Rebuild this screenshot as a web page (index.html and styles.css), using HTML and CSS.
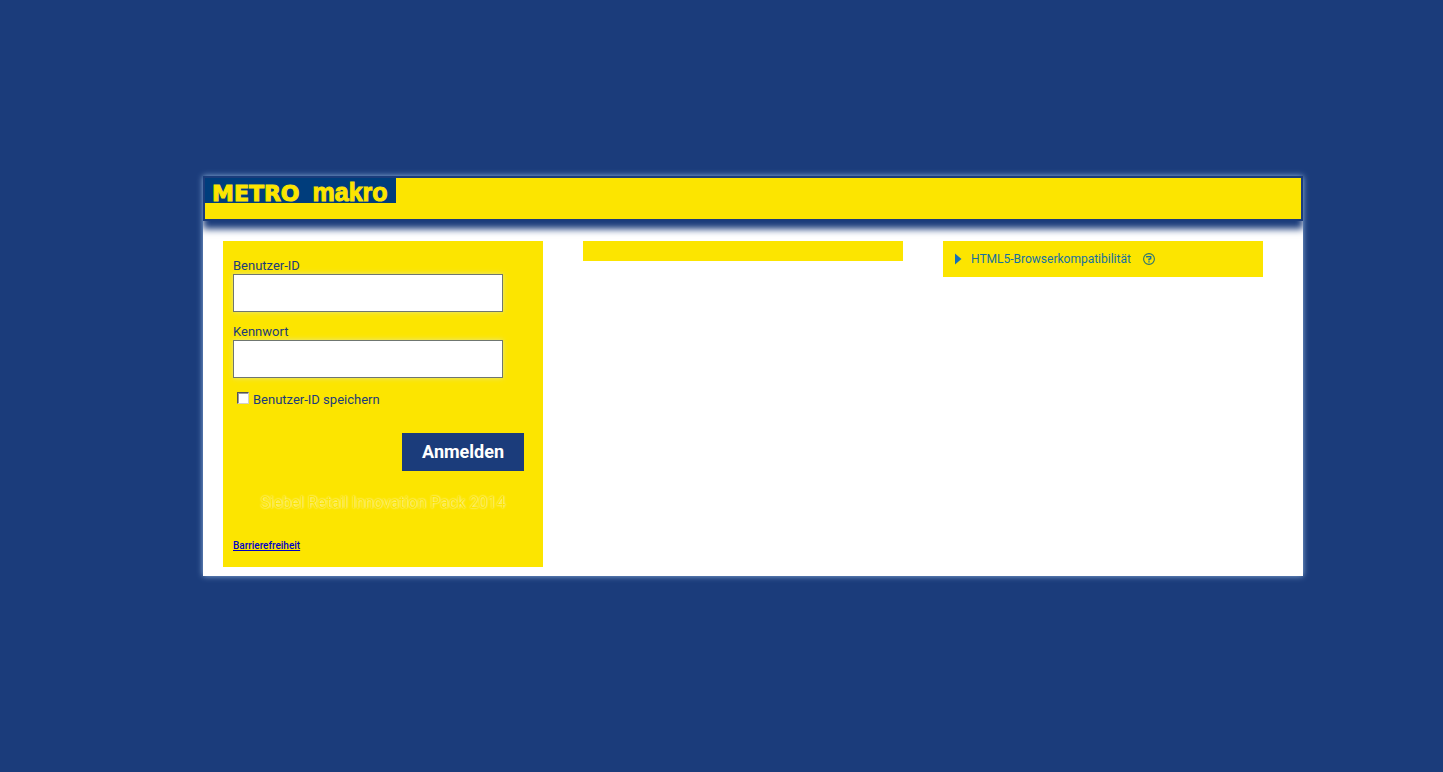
FILE: index.html
```
<!DOCTYPE html>
<html lang="de">
<head>
<meta charset="utf-8">
<title>Anmelden</title>
<link rel="stylesheet" href="styles.css">
</head>
<body>
<main class="card">
  <header class="banner">
    <div class="logo"><span class="logo-metro">METRO</span><span class="logo-makro">makro</span></div>
  </header>
  <div class="columns">
    <form class="panel login">
      <label class="label" for="user">Benutzer-ID</label>
      <input class="field" id="user" type="text">
      <label class="label" for="password">Kennwort</label>
      <input class="field" id="password" type="password">
      <div class="remember">
        <input class="check" id="remember" type="checkbox">
        <label for="remember">Benutzer-ID speichern</label>
      </div>
      <button class="submit" type="button">Anmelden</button>
      <p class="product">Siebel Retail Innovation Pack 2014</p>
      <a class="access" href="#">Barrierefreiheit</a>
    </form>
    <section class="panel notice"></section>
    <section class="panel compat">
      <svg class="arrow" width="7" height="12" viewBox="0 0 7 12" aria-hidden="true"><path d="M0 .5 6.5 6 0 11.5Z" fill="#1670b8"/></svg>
      <a class="compat-link" href="#">HTML5-Browserkompatibilität</a>
      <svg class="help" width="12" height="12" viewBox="0 0 12 12" aria-hidden="true" fill="none"><circle cx="6" cy="6" r="5.4" stroke="#2d7470" stroke-width="1.1"/><path d="M3.8 4.4V3.6H7.7V5.7L6 6.3V7.4M6 8.2V9.4" stroke="#1670a0" stroke-width="1.4"/></svg>
    </section>
  </div>
</main>
</body>
</html>
```
FILE: styles.css
```
* { box-sizing: border-box; }
body {
  margin: 0;
  min-height: 100vh;
  padding: 0 0 20px 63px;
  display: flex;
  align-items: center;
  justify-content: center;
  background: #1b3c7b;
  color: #1b3c7b;
  font-family: Roboto, "Liberation Sans", sans-serif;
  font-size: 13px;
  line-height: 16px;
}
.card {
  width: 100%;
  max-width: 1100px;
  min-height: 400px;
  background: #fff;
  box-shadow: 0 0 6px #8fb4dc;
}
.banner {
  min-height: 45px;
  border: 2px solid #1b3c7b;
  background: #fce500;
  box-shadow: 0 8px 7px #1b3c7b;
  clip-path: inset(0 0 -20px 0);
}
.logo {
  display: flex;
  align-items: baseline;
  gap: 13px;
  width: 191px;
  height: 25px;
  padding-left: 7px;
  background: #003d7c;
  color: #fce500;
  font-weight: bold;
  line-height: 28px;
}
.logo-metro {
  font-family: "DejaVu Sans", sans-serif;
  font-size: 22px;
  -webkit-text-stroke: 1px #fce500;
}
.logo-makro {
  font-family: "Liberation Sans", sans-serif;
  font-size: 25px;
  -webkit-text-stroke: 1px #fce500;
}
.columns {
  display: grid;
  grid-template-columns: repeat(3, minmax(0, 320px));
  gap: 40px;
  align-items: start;
  padding: 20px 20px 9px;
}
.panel { min-height: 20px; background: #fce500; }
.login { display: flex; flex-direction: column; padding: 17px 10px 15px; }
.label { line-height: 16px; }
.field {
  width: 270px;
  max-width: 100%;
  height: 38px;
  margin: 0 0 12px;
  padding: 0 8px;
  border: 1px solid #6f7670;
  border-radius: 0;
  background: #fff;
  font: inherit;
  box-shadow: 0 0 5px #e5e58c;
}
.remember { display: flex; align-items: center; gap: 4px; padding: 2px 0 0 4px; }
.check {
  appearance: none;
  width: 12px;
  height: 12px;
  margin: 0 0 4px;
  border: 1px solid;
  border-color: #555 #d4d0c8 #d4d0c8 #555;
  background: #fff;
  box-shadow: inset 1px 1px #999;
}
.submit {
  align-self: flex-end;
  margin: 25px 9px 0 0;
  padding: 8px 20px;
  border: 0;
  background: #1b3c7b;
  color: #fff;
  font: bold 18px/22px Roboto, sans-serif;
}
.product {
  margin: 21px 0 26px;
  color: #fce500;
  text-align: center;
  font-size: 16px;
  line-height: 22px;
  text-shadow: 0 0 2px #fff;
}
.access {
  align-self: flex-start;
  color: #0000c8;
  font-size: 10px;
  font-weight: 500;
  line-height: 12px;
}
.compat {
  display: flex;
  align-items: center;
  min-height: 36px;
  padding: 0 12px;
}
.arrow { margin-right: 9px; }
.compat-link { color: #1670a0; font-size: 12px; text-decoration: none; }
.help { margin-left: 12px; }
```
